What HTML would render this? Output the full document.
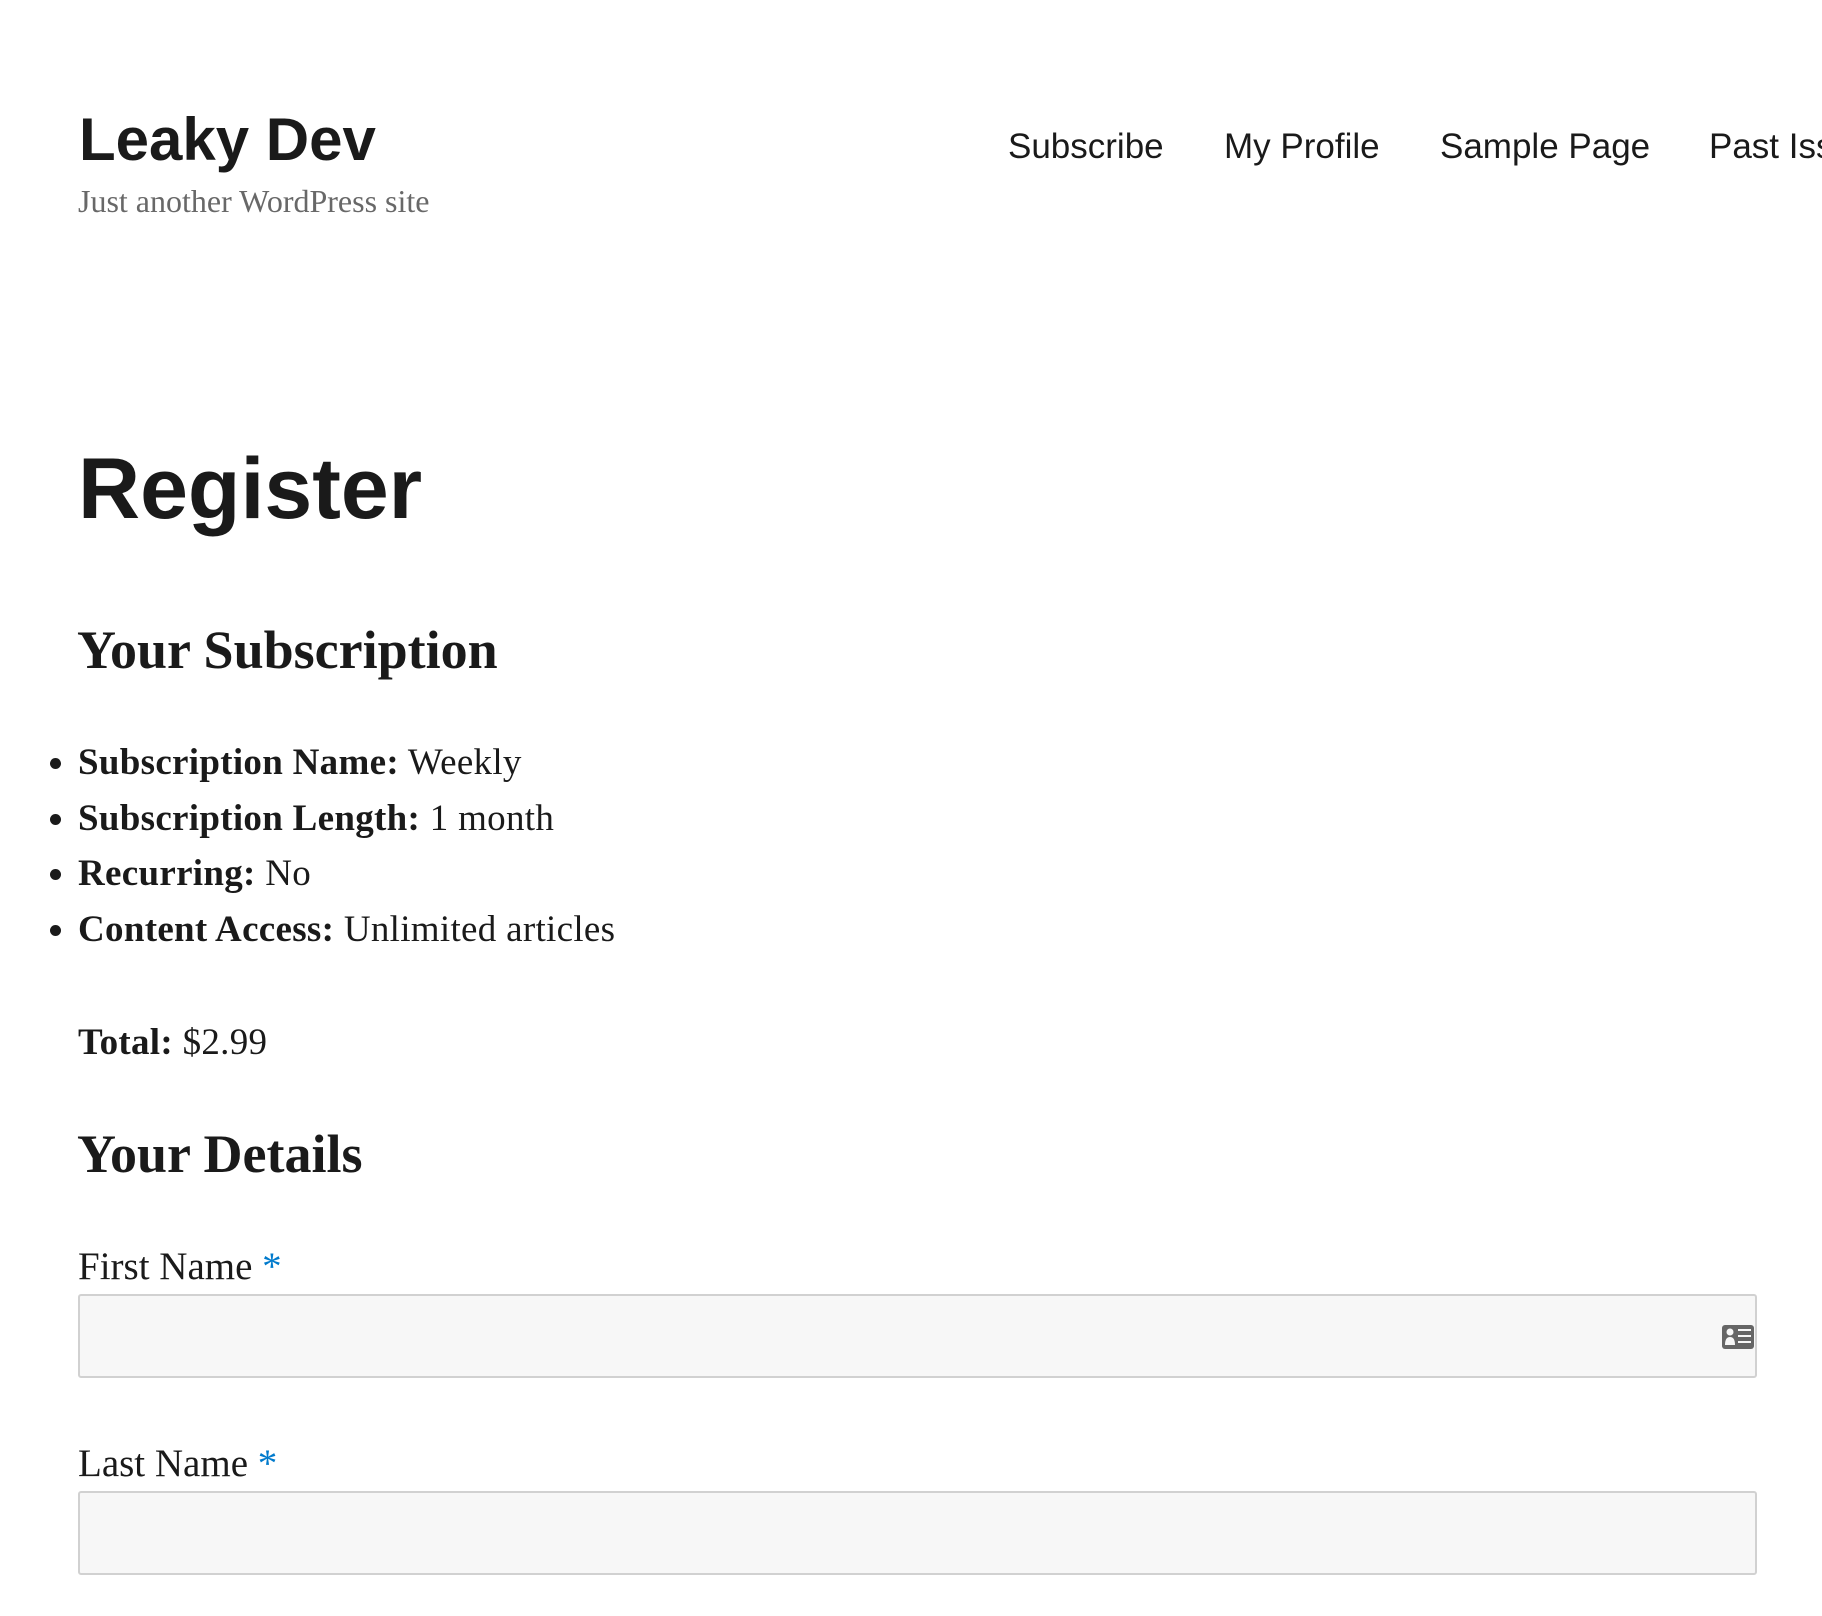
<!DOCTYPE html>
<html><head><meta charset="utf-8"><style>
html,body{margin:0;padding:0;background:#fff;width:1822px;height:1616px;overflow:hidden;position:relative;color:#1a1a1a}
.a{position:absolute;white-space:nowrap;line-height:1}
.sans{font-family:"Liberation Sans",sans-serif}
.serif{font-family:"Liberation Serif",serif}
.nav{font-size:35px;top:129px}
.li{font-size:37px;left:78px;letter-spacing:0.3px}
.li b{font-weight:bold}
.dot{position:absolute;left:50px;width:11px;height:11px;border-radius:50%;background:#1a1a1a}
.inp{position:absolute;left:78px;width:1675px;height:80px;background:#f7f7f7;border:2px solid #d1d1d1;border-radius:3px;box-sizing:content-box}
.lab{font-size:39px;left:78px}
.ast{color:#007acc}
</style></head><body>
<div class="a sans" style="left:79px;top:110px;font-size:60px;font-weight:bold">Leaky Dev</div>
<div class="a serif" style="left:78px;top:185px;font-size:32px;color:#686868">Just another WordPress site</div>

<div class="a sans nav" style="left:1008px">Subscribe</div>
<div class="a sans nav" style="left:1224px">My Profile</div>
<div class="a sans nav" style="left:1440px">Sample Page</div>
<div class="a sans nav" style="left:1709px">Past Issues</div>

<div class="a sans" style="left:78px;top:446px;font-size:86px;font-weight:bold">Register</div>

<div class="a serif" style="left:77px;top:623px;font-size:54px;font-weight:bold">Your Subscription</div>

<div class="dot" style="top:758px"></div>
<div class="a serif li" style="top:744px"><b>Subscription Name:</b> Weekly</div>
<div class="dot" style="top:814px"></div>
<div class="a serif li" style="top:800px"><b>Subscription Length:</b> 1 month</div>
<div class="dot" style="top:869px"></div>
<div class="a serif li" style="top:855px"><b>Recurring:</b> No</div>
<div class="dot" style="top:925px"></div>
<div class="a serif li" style="top:911px"><b>Content Access:</b> Unlimited articles</div>

<div class="a serif li" style="top:1024px"><b>Total:</b> $2.99</div>

<div class="a serif" style="left:77px;top:1127px;font-size:54px;font-weight:bold">Your Details</div>

<div class="a serif lab" style="top:1247px">First Name <span class="ast">*</span></div>
<div class="inp" style="top:1294px"></div>
<svg style="position:absolute;left:1722px;top:1325px" width="32" height="24" viewBox="0 0 32 24">
<rect x="0" y="0" width="32" height="24" rx="3" fill="#666"/>
<circle cx="8" cy="7" r="3.5" fill="#f7f7f7"/>
<path d="M3 20 Q3 12 8 12 Q13 12 13 20 Z" fill="#f7f7f7"/>
<rect x="16" y="4" width="13" height="2" fill="#f7f7f7"/>
<rect x="16" y="10" width="13" height="2" fill="#f7f7f7"/>
<rect x="16" y="16" width="13" height="2" fill="#f7f7f7"/>
</svg>

<div class="a serif lab" style="top:1444px">Last Name <span class="ast">*</span></div>
<div class="inp" style="top:1491px"></div>
</body></html>
